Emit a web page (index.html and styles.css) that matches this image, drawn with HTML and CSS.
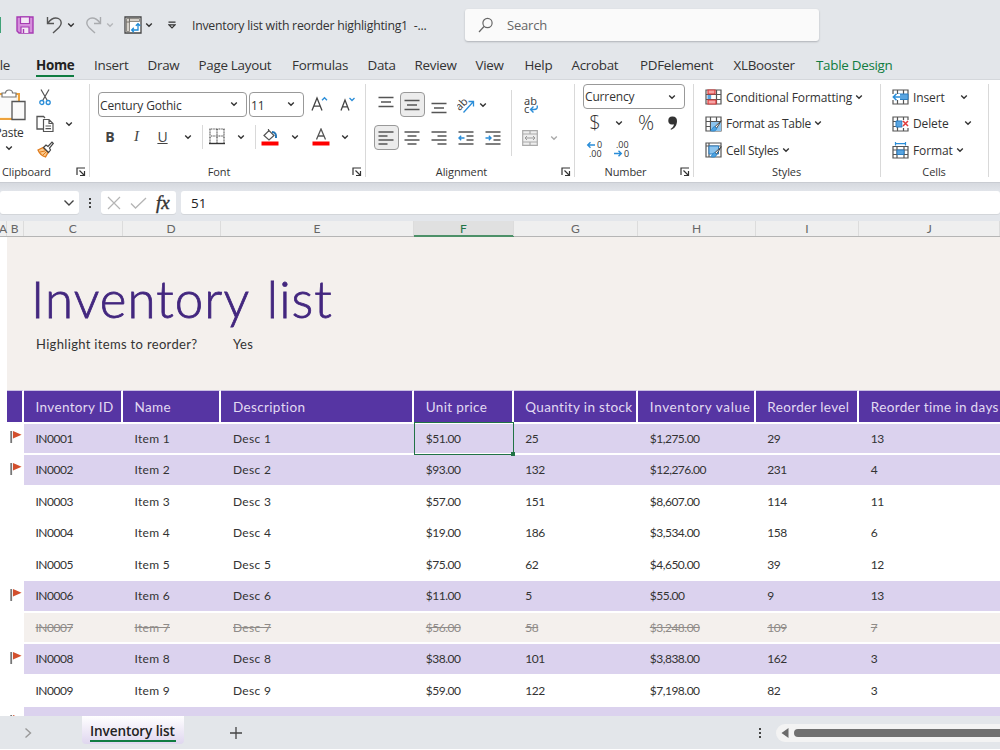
FILE: index.html
```html
<!DOCTYPE html>
<html lang="en">
<head>
    <meta charset="utf-8" />
    <meta name="viewport" content="width=device-width, initial-scale=1" />
    <title>Inventory list with reorder highlighting1</title>
    <link rel="stylesheet" href="styles.css">
</head>
<body>
    <!-- shared icons -->
    <svg class="defs" width="0" height="0">
        <symbol id="chev" viewBox="0 0 8 8"><path d="M1.2 2.5 4 5.3 6.8 2.5" fill="none" stroke="currentColor" stroke-width="1.4"/></symbol>
        <symbol id="launch" viewBox="0 0 10 10"><path d="M1 8V1h8M3.5 3.5 8 8M8.5 4v4.5H4" fill="none" stroke="#333" stroke-width="1.2"/></symbol>
        <symbol id="flag" viewBox="0 0 12 14"><path d="M1.2 1v12" stroke="#777" stroke-width="1.8"/><path d="M3 1l8.6 3.7L3 8.4z" fill="#d24f2d"/></symbol>
        <symbol id="sheet" viewBox="0 0 17 16"><path d="M1 1h15v14H1zM1 5.5h15M1 10.5h15M5.5 1v14M11.5 1v14" fill="#fff" stroke="#555" stroke-width="1.2"/></symbol>
        <symbol id="brush" viewBox="0 0 12 12"><path d="M11.3.7 5 6.6l1.6 1.6z" fill="#fff" stroke="#444" stroke-width="1"/><path d="M4.6 6.6c-2 .2-1.8 2.6-4 4 2.500 1 6 .6 6-2.400z" fill="#4ea3e0" stroke="#2581c9" stroke-width=".8"/></symbol>
    </svg>

    <header class="titlebar">
        <span class="logo-edge"></span>
        <svg class="tb-save" width="18" height="18" viewBox="0 0 18 18"><path d="M1 1h16v16H3L1 15z" fill="#d58fdc" stroke="#a63bb3" stroke-width="1.4"/><path d="M4.500 1h9v6.500h-9z" fill="#f3e7f5" stroke="#a63bb3" stroke-width="1.2"/><path d="M5 17v-6h8v6" fill="#f3e7f5" stroke="#a63bb3" stroke-width="1.2"/><path d="M7.500 13v4" stroke="#a63bb3" stroke-width="1.4"/></svg>
        <svg class="tb-undo" width="17" height="18" viewBox="0 0 17 18"><path d="M1.500 1v6.500H8M1.800 7.200C4.500 3.500 7 2 9.800 2c3.200 0 5.400 2.200 5.400 5 0 2-1 3.200-2.200 4.400L7 17" fill="none" stroke="#555" stroke-width="1.4"/></svg>
        <svg class="chev tb-c1" width="8" height="8"><use href="#chev"/></svg>
        <svg class="tb-redo" width="17" height="18" viewBox="0 0 17 18"><path d="M15.500 1v6.500H9M15.200 7.200C12.500 3.500 10 2 7.200 2 4 2 1.800 4.200 1.800 7c0 2 1 3.200 2.200 4.400L10 17" fill="none" stroke="#a9abae" stroke-width="1.4"/></svg>
        <svg class="chev tb-c2" width="8" height="8"><use href="#chev"/></svg>
        <svg class="tb-pivot" width="18" height="18" viewBox="0 0 18 18"><path d="M1 1h16v16H1z" fill="#fff" stroke="#444" stroke-width="1.3"/><path d="M2.500 2.500h13v3h-10v10h-3z" fill="#d6d2cb" stroke="#77736d" stroke-width=".8"/><path d="M5.500 2v4M2 6h4" stroke="#77736d"/><path d="M8 14h6V8M9.800 11.800 7.700 14l2.100 2.200M11.800 9.800 14 7.700l2.200 2.100" fill="none" stroke="#1e8ad6" stroke-width="1.3"/></svg>
        <svg class="chev tb-c3" width="8" height="8"><use href="#chev"/></svg>
        <svg class="tb-more" width="8" height="8" viewBox="0 0 8 8"><path d="M.5 1.200h7M1 3.800h6L4 6.800z" fill="none" stroke="#333" stroke-width="1.200"/></svg>
        <span class="doc-name">Inventory list with reorder highlighting1&nbsp; -...</span>
        <div class="search">
            <svg width="16" height="16" viewBox="0 0 16 16"><circle cx="9.500" cy="6" r="4.600" fill="none" stroke="#666" stroke-width="1.200"/><path d="M6 9.500 1 15" stroke="#666" stroke-width="1.200"/></svg>
            <span>Search</span>
        </div>
    </header>

    <nav class="tabs">
        <span class="cut">File</span><span class="on">Home</span><span>Insert</span><span>Draw</span><span>Page Layout</span><span>Formulas</span><span>Data</span><span>Review</span><span>View</span><span>Help</span><span>Acrobat</span><span>PDFelement</span><span>XLBooster</span><span class="ctx">Table Design</span>
    </nav>

    <section class="ribbon">
        <div class="group clipboard">
            <div class="body">
                <div class="paste">
                    <svg width="30" height="34" viewBox="0 0 30 34"><path d="M1 5h22v25H1z" fill="#fff3df" stroke="#eda23c" stroke-width="2"/><path d="M4 8h16v20H4z" fill="#fafafa"/><path d="M6 8V4h3.500C9.500 0 16.500 0 16.500 4H20v4z" fill="#fff" stroke="#777" stroke-width="1.200"/><path d="M16 12.500h13v18H16z" fill="#fafafa" stroke="#555" stroke-width="1.300"/></svg>
                    <span>Paste</span>
                    <svg class="chev" width="8" height="8"><use href="#chev"/></svg>
                </div>
                <div class="clip-tools">
                    <svg width="12" height="17" viewBox="0 0 12 17"><path d="M2 .5 8.300 11.500M10 .5 3.700 11.500" stroke="#555" stroke-width="1.200"/><circle cx="2.800" cy="13.500" r="2" fill="none" stroke="#2a8dd8" stroke-width="1.300"/><circle cx="9.200" cy="13.500" r="2" fill="none" stroke="#2a8dd8" stroke-width="1.300"/></svg>
                    <span></span>
                    <svg width="18" height="18" viewBox="0 0 18 18"><path d="M7 14H1V1.500h6.500l1.500 1.500" fill="none" stroke="#555" stroke-width="1.300"/><path d="M7.500 4.500H13l4 4v8H7.500zM13 4.500v4h4M9.500 11h5.500M9.500 13.700h5.500" fill="#fff" stroke="#555" stroke-width="1.200"/></svg>
                    <svg class="chev" width="8" height="8"><use href="#chev"/></svg>
                    <svg width="17" height="17" viewBox="0 0 17 17"><path d="M1 9l5-2.500L11 11.500 8.500 16C5 15 2.500 12.500 1 9z" fill="#fbc98c" stroke="#e07b1c" stroke-width="1.300"/><path d="M3 11l5-1M6 14l3-3" stroke="#e07b1c"/><path d="M6.500 6.500 9 4l2 1.500L15 1.200l1.300 1.300L12.500 7l1 2-2 2.500z" fill="#fff" stroke="#444" stroke-width="1.200"/></svg>
                </div>
            </div>
            <div class="label"><span>Clipboard</span><svg width="10" height="10"><use href="#launch"/></svg></div>
        </div>

        <div class="group font">
            <div class="body">
                <div class="font-top">
                    <div class="combo"><span>Century Gothic</span><svg class="chev" width="8" height="8"><use href="#chev"/></svg></div>
                    <div class="combo size"><span>11</span><svg class="chev" width="8" height="8"><use href="#chev"/></svg></div>
                    <svg width="18" height="16" viewBox="0 0 18 16"><path d="M1 14.500 6 2l5 12.500M2.800 10.200h6.400" fill="none" stroke="#444" stroke-width="1.300"/><path d="M11 4.200 13.500 1.700 16 4.200" fill="none" stroke="#2a8dd8" stroke-width="1.300"/></svg>
                    <svg width="16" height="16" viewBox="0 0 16 16"><path d="M1 14.500 5 4l4 10.500M2.500 10.800h5" fill="none" stroke="#444" stroke-width="1.300"/><path d="M9.500 2 12 4.500 14.500 2" fill="none" stroke="#2a8dd8" stroke-width="1.300"/></svg>
                </div>
                <div class="font-bottom">
                    <b>B</b><i>I</i><u>U</u>
                    <svg class="chev" width="8" height="8"><use href="#chev"/></svg>
                    <span class="sep"></span>
                    <svg width="16" height="17" viewBox="0 0 16 17"><path d="M.5 1h15M.5 8h15M1 1v14M8 1v14M15 1v14" stroke="#444" stroke-width="1.200" stroke-dasharray="1 .6"/><path d="M0 15.500h16" stroke="#333" stroke-width="1.400"/></svg>
                    <svg class="chev" width="8" height="8"><use href="#chev"/></svg>
                    <span class="sep"></span>
                    <svg width="18" height="18" viewBox="0 0 18 18"><path d="M7.500 1v3M3 7.500l5-5 5 5-5 4.500z" fill="#fff" stroke="#555" stroke-width="1.200"/><path d="M11 4c3 0 4.500 2 4 6" fill="none" stroke="#2374b5" stroke-width="2"/><path d="M.5 13.500h17V17.500H.5z" fill="#f00"/></svg>
                    <svg class="chev" width="8" height="8"><use href="#chev"/></svg>
                    <svg width="18" height="18" viewBox="0 0 18 18"><path d="M4.500 11.500 9 1l4.500 10.500M6 8h6" fill="none" stroke="#555" stroke-width="1.300"/><path d="M.5 13.500h17V17.500H.5z" fill="#f00"/></svg>
                    <svg class="chev" width="8" height="8"><use href="#chev"/></svg>
                </div>
            </div>
            <div class="label"><span>Font</span><svg width="10" height="10"><use href="#launch"/></svg></div>
        </div>

        <div class="group align">
            <div class="body">
                <div class="align-main">
                    <span class="btn high"><svg width="16" height="14" viewBox="0 0 16 14"><path d="M.5 1.500h15M3 6h10M.5 10.500h15"/></svg></span>
                    <span class="btn pressed"><svg width="16" height="14" viewBox="0 0 16 14"><path d="M.5 2.500h15M3 7h10M.5 11.500h15"/></svg></span>
                    <span class="btn low"><svg width="16" height="14" viewBox="0 0 16 14"><path d="M.5 2.500h15M3 7h10M.5 11.500h15"/></svg></span>
                    <span class="btn"><svg class="plain" width="18" height="18" viewBox="0 0 18 18"><text x="-1" y="11" transform="rotate(-45 6 9)" font-family="Noto Sans" font-size="11" fill="#444">ab</text><path d="M6.500 16.500 16 6M11.500 5.500h5v5" fill="none" stroke="#2a8dd8" stroke-width="1.400"/></svg></span>
                    <svg class="chev" width="8" height="8"><use href="#chev"/></svg>
                    <span class="btn pressed"><svg width="16" height="14" viewBox="0 0 16 14"><path d="M.5 1h15M.5 5h9M.5 9h15M.5 13h9"/></svg></span>
                    <span class="btn"><svg width="16" height="14" viewBox="0 0 16 14"><path d="M.5 1h15M3.500 5h9M.5 9h15M3.500 13h9"/></svg></span>
                    <span class="btn"><svg width="16" height="14" viewBox="0 0 16 14"><path d="M.5 1h15M6.500 5h9M.5 9h15M6.500 13h9"/></svg></span>
                    <span class="btn"><svg width="16" height="14" viewBox="0 0 16 14"><path d="M.5 1h15M8.500 5h7M8.500 9h7M.5 13h15"/><path class="blue" d="M6.500 7H1M3.200 4.700.9 7l2.300 2.300"/></svg></span>
                    <span class="btn"><svg width="16" height="14" viewBox="0 0 16 14"><path d="M.5 1h15M8.500 5h7M8.500 9h7M.5 13h15"/><path class="blue" d="M.5 7H6M3.800 4.700 6.100 7 3.800 9.300"/></svg></span>
                </div>
                <span class="sep tall"></span>
                <div class="align-side">
                    <svg width="17" height="18" viewBox="0 0 17 18"><text x="2" y="9" font-family="Noto Sans" font-size="11" fill="#444">ab</text><text x="2" y="17" font-family="Noto Sans" font-size="11" fill="#444">c</text><path d="M15 9.500c1.200 2.500-.5 4-3 4H8.500M11.500 10.500l-3 3 3 3" fill="none" stroke="#2a8dd8" stroke-width="1.400"/></svg>
                    <span></span>
                    <svg width="16" height="16" viewBox="0 0 16 16"><path d="M.7.7h14.600v14.600H.7zM.7 4h14.600M.7 12h14.600M8 .7V4M8 12v3.300" fill="#eee" stroke="#aaa" stroke-width="1.200"/><path d="M3 8h10M5 6 3 8l2 2M11 6l2 2-2 2" fill="none" stroke="#999"/></svg>
                    <svg class="chev dim" width="8" height="8"><use href="#chev"/></svg>
                </div>
            </div>
            <div class="label"><span>Alignment</span><svg width="10" height="10"><use href="#launch"/></svg></div>
        </div>

        <div class="group number">
            <div class="body">
                <div class="combo"><span>Currency</span><svg class="chev" width="8" height="8"><use href="#chev"/></svg></div>
                <div class="num-row">
                    <span class="sym">$</span>
                    <svg class="chev" width="8" height="8"><use href="#chev"/></svg>
                    <span class="sym">%</span>
                    <svg width="10" height="14" viewBox="0 0 10 14"><path d="M4.600.5a4 4 0 0 0-.6 8c.8.100 1.500 0 2-.3-.4 2-1.500 3.600-3.500 4.800l.5.8C6.500 12.500 9 9.500 9 5 9 2 7.500.5 4.600.5z" fill="#333"/></svg>
                </div>
                <div class="num-row">
                    <svg width="18" height="18" viewBox="0 0 18 18"><text x="11" y="8" class="dig">0</text><text x="3" y="17" class="dig">.00</text><path d="M9 5H1.700M4.500 2.200 1.700 5l2.800 2.800" fill="none" stroke="#2a8dd8" stroke-width="1.400"/></svg>
                    <svg width="18" height="18" viewBox="0 0 18 18"><text x="3" y="8" class="dig">.00</text><text x="11" y="17" class="dig">0</text><path d="M1 13.500h7.300M5.500 10.700l2.800 2.800-2.800 2.800" fill="none" stroke="#2a8dd8" stroke-width="1.400"/></svg>
                </div>
            </div>
            <div class="label"><span>Number</span><svg width="10" height="10"><use href="#launch"/></svg></div>
        </div>

        <div class="group styles">
            <div class="body list">
                <div class="item"><svg width="17" height="16" viewBox="0 0 17 16"><use href="#sheet" width="17" height="16"/><path d="M3 1h7v4H3zM3 11h8v4H3z" fill="#f6a5a5" stroke="#d83b3b" stroke-width="1.200"/><path d="M2.500 6h3.500v4H2.500z" fill="#5aa5e0"/></svg><span>Conditional Formatting</span><svg class="chev" width="8" height="8"><use href="#chev"/></svg></div>
                <div class="item"><svg width="17" height="16" viewBox="0 0 17 16"><use href="#sheet" width="17" height="16"/><path d="M6 6h10v9H6z" fill="#8cc4ee"/><use href="#brush" x="5" y="4" width="12" height="12"/></svg><span class="tight">Format as Table</span><svg class="chev" width="8" height="8"><use href="#chev"/></svg></div>
                <div class="item"><svg width="17" height="16" viewBox="0 0 17 16"><path d="M1 1h15v14H1zM1 4h15M4 1v14" fill="#fff" stroke="#555" stroke-width="1.200"/><path d="M4 4h9.500v8H4z" fill="#8cc4ee" stroke="#2a7fc4"/><use href="#brush" x="5" y="4" width="12" height="12"/></svg><span class="tight">Cell Styles</span><svg class="chev" width="8" height="8"><use href="#chev"/></svg></div>
            </div>
            <div class="label solo"><span>Styles</span></div>
        </div>

        <div class="group cells">
            <div class="body list">
                <div class="item"><svg width="17" height="16" viewBox="0 0 17 16"><use href="#sheet" width="17" height="16"/><path d="M6 5h10v5.500H6z" fill="#5aa5e0" stroke="#2a7fc4"/><path d="M0 5h8v6H0z" fill="#fff"/><path d="M8 8H1.500M4.500 4.800 1.300 8l3.200 3.200" fill="none" stroke="#2a8dd8" stroke-width="1.500"/></svg><span>Insert</span><svg class="chev far" width="8" height="8"><use href="#chev"/></svg></div>
                <div class="item"><svg width="17" height="16" viewBox="0 0 17 16"><use href="#sheet" width="17" height="16"/><path d="M4 5h6v6H4z" fill="#5aa5e0" stroke="#2a7fc4"/><path d="M10.500 4H17v8h-6.500z" fill="#fff"/><path d="M11 5l5 5M16 5l-5 5" stroke="#e03c3c" stroke-width="1.500"/></svg><span>Delete</span><svg class="chev far" width="8" height="8"><use href="#chev"/></svg></div>
                <div class="item"><svg width="17" height="17" viewBox="0 0 17 17"><path d="M1 4.500h15V16H1zM1 8h15M1 12.500h15M5 4.500V16M12 4.500V16" fill="#fff" stroke="#555" stroke-width="1.200"/><path d="M5 8h7v4.500H5z" fill="#5aa5e0" stroke="#2a7fc4"/><path d="M3.500 1.700h10M3.500 0v3.500M13.500 0v3.500" stroke="#2a8dd8" stroke-width="1.200"/></svg><span>Format</span><svg class="chev" width="8" height="8"><use href="#chev"/></svg></div>
            </div>
            <div class="label solo"><span>Cells</span></div>
        </div>
    </section>

    <section class="formula">
        <div class="name-box"><svg width="12" height="12" viewBox="0 0 12 12"><path d="M1.500 3.500 6 8l4.500-4.500" fill="none" stroke="#444" stroke-width="1.400"/></svg></div>
        <span class="dots"><i></i><i></i><i></i></span>
        <div class="fx-box">
            <svg width="14" height="14" viewBox="0 0 14 14"><path d="M1 1l12 12M13 1 1 13" stroke="#b5b5b5" stroke-width="1.200"/></svg>
            <svg width="17" height="12" viewBox="0 0 17 12"><path d="M1 6.500 5.500 11 16 1" fill="none" stroke="#b5b5b5" stroke-width="1.300"/></svg>
            <span class="fx">fx</span>
        </div>
        <div class="value">51</div>
    </section>

    <main class="sheet">
        <div class="row cols"><span>A</span><span>B</span><span>C</span><span>D</span><span>E</span><span class="sel">F</span><span>G</span><span>H</span><span>I</span><span>J</span></div>
        <div class="banner">
            <h1>Inventory list</h1>
            <p><span>Highlight items to reorder?</span><span>Yes</span></p>
        </div>
        <div class="row head"><span></span><span></span><span>Inventory ID</span><span>Name</span><span>Description</span><span>Unit price</span><span>Quantity in stock</span><span>Inventory value</span><span>Reorder level</span><span>Reorder time in days</span></div>
        <div class="row hot"><span></span><span><svg width="12" height="14"><use href="#flag"/></svg></span><span>IN0001</span><span>Item 1</span><span>Desc 1</span><span class="active">$51.00</span><span>25</span><span>$1,275.00</span><span>29</span><span>13</span></div>
        <div class="row hot"><span></span><span><svg width="12" height="14"><use href="#flag"/></svg></span><span>IN0002</span><span>Item 2</span><span>Desc 2</span><span>$93.00</span><span>132</span><span>$12,276.00</span><span>231</span><span>4</span></div>
        <div class="row"><span></span><span></span><span>IN0003</span><span>Item 3</span><span>Desc 3</span><span>$57.00</span><span>151</span><span>$8,607.00</span><span>114</span><span>11</span></div>
        <div class="row"><span></span><span></span><span>IN0004</span><span>Item 4</span><span>Desc 4</span><span>$19.00</span><span>186</span><span>$3,534.00</span><span>158</span><span>6</span></div>
        <div class="row"><span></span><span></span><span>IN0005</span><span>Item 5</span><span>Desc 5</span><span>$75.00</span><span>62</span><span>$4,650.00</span><span>39</span><span>12</span></div>
        <div class="row hot"><span></span><span><svg width="12" height="14"><use href="#flag"/></svg></span><span>IN0006</span><span>Item 6</span><span>Desc 6</span><span>$11.00</span><span>5</span><span>$55.00</span><span>9</span><span>13</span></div>
        <div class="row gone"><span></span><span></span><span>IN0007</span><span>Item 7</span><span>Desc 7</span><span>$56.00</span><span>58</span><span>$3,248.00</span><span>109</span><span>7</span></div>
        <div class="row hot"><span></span><span><svg width="12" height="14"><use href="#flag"/></svg></span><span>IN0008</span><span>Item 8</span><span>Desc 8</span><span>$38.00</span><span>101</span><span>$3,838.00</span><span>162</span><span>3</span></div>
        <div class="row"><span></span><span></span><span>IN0009</span><span>Item 9</span><span>Desc 9</span><span>$59.00</span><span>122</span><span>$7,198.00</span><span>82</span><span>3</span></div>
        <div class="row hot"><span></span><span><svg width="12" height="14"><use href="#flag"/></svg></span><span></span><span></span><span></span><span></span><span></span><span></span><span></span><span></span></div>
    </main>

    <footer class="bottom">
        <svg class="next" width="8" height="12" viewBox="0 0 8 12"><path d="M1.500 1.500 6.500 6l-5 4.500" fill="none" stroke="#999" stroke-width="1.400"/></svg>
        <div class="sheet-tab"><span>Inventory list</span></div>
        <svg class="add" width="12" height="12" viewBox="0 0 12 12"><path d="M6 0v12M0 6h12" stroke="#444" stroke-width="1.300"/></svg>
        <span class="dots"><i></i><i></i><i></i></span>
        <div class="scroll"><svg width="8" height="10" viewBox="0 0 8 10"><path d="M7.500 0v10L.5 5z" fill="#6b6b6b"/></svg><span class="thumb"></span></div>
    </footer>
</body>
</html>
```

FILE: styles.css
```css
* {
    box-sizing: border-box;
}
body {
    margin: 0;
    width: 1000px;
    height: 750px;
    overflow: hidden;
    display: flex;
    flex-direction: column;
    background: #fff;
    color: #333;
    font-family: "Open Sans", sans-serif;
    font-size: 12px;
    white-space: nowrap;
}
svg {
    display: block;
    flex: none;
}
.defs {
    position: absolute;
}
.chev {
    color: #333;
}
.dim {
    color: #aaa;
}

/* title bar */
.titlebar {
    height: 50px;
    flex: none;
    display: flex;
    align-items: center;
    background: #e3e6ea;
}
.logo-edge {
    width: 1px;
    height: 16px;
    background: #3fa277;
    margin-right: 15px;
}
.tb-undo {
    margin-left: 12px;
}
.tb-c1 {
    margin-left: 4px;
}
.tb-redo {
    margin-left: 10px;
}
.tb-c2 {
    margin-left: 4px;
    color: #b5b7ba;
}
.tb-pivot {
    margin-left: 10px;
}
.tb-c3 {
    margin-left: 3px;
}
.tb-more {
    margin-left: 15px;
}
.doc-name {
    width: 273px;
    margin-left: 16px;
    font-size: 12.3px;
    letter-spacing: -0.25px;
}
.search {
    width: 354px;
    height: 32px;
    display: flex;
    align-items: center;
    gap: 13px;
    padding-left: 13px;
    background: #fafafa;
    border-radius: 3px;
    box-shadow: 0 1px 2px #aeb1b6;
    color: #666;
    font-size: 13px;
    letter-spacing: -0.2px;
}

/* tabs */
.tabs {
    height: 30px;
    flex: none;
    display: grid;
    grid-template-columns: 36px 58px 53.5px 51px 93.5px 75.5px 47px 61px 49px 47px 68.5px 93.5px 82.5px 1fr;
    justify-items: start;
    align-items: center;
    padding-top: 2px;
    background: #e3e6ea;
    border-bottom: 1px solid #d5d8dc;
    font-size: 13.4px;
    letter-spacing: -0.28px;
}
.tabs span {
    line-height: 20px;
    border-bottom: 2px solid transparent;
}
.tabs .cut {
    margin-left: -10px;
}
.tabs .on {
    font-weight: 700;
    color: #222;
    border-color: #107c41;
}
.tabs .ctx {
    color: #107c41;
}

/* ribbon */
.ribbon {
    height: 103px;
    flex: none;
    display: flex;
    padding-top: 4px;
    background: #fff;
    border-bottom: 1px solid #c9ccd2;
}
.group {
    display: flex;
    flex-direction: column;
    height: 93px;
    border-right: 1px solid #d9d9d9;
}
.body {
    height: 80px;
    flex: none;
}
.label {
    display: flex;
    align-items: center;
    height: 17px;
    font-size: 11px;
    padding-right: 3px;
    letter-spacing: -0.1px;
}
.label span {
    flex: 1;
    text-align: center;
    padding-right: 4px;
}
.label.solo {
    padding-right: 0;
}
.label.solo span {
    padding-right: 1px;
}
.clipboard {
    width: 112px;
    margin-left: -22px;
}
.clipboard .label span {
    padding-right: 1px;
}
.clipboard .body {
    display: flex;
}
.paste {
    width: 56px;
    display: flex;
    flex-direction: column;
    align-items: center;
    padding: 5px 0 0 6px;
}
.paste span {
    line-height: 20px;
    margin-bottom: 1px;
    letter-spacing: -0.3px;
}
.paste svg:first-child {
    margin-right: -3px;
}
.clip-tools {
    display: grid;
    grid-template-columns: 22px 26px;
    grid-template-rows: 26px 27px 25px;
    justify-items: center;
    align-items: center;
}
.combo {
    display: flex;
    align-items: center;
    justify-content: space-between;
    height: 25px;
    padding: 0 8px 0 1px;
    border: 1px solid #999;
    border-radius: 4px;
    letter-spacing: -0.15px;
}
.font {
    width: 276px;
}
.font-top {
    display: grid;
    grid-template-columns: 149px 55px 28px 24px;
    column-gap: 2px;
    align-items: center;
    justify-items: center;
    padding: 8px 0 0 8px;
}
.font-top .combo {
    width: 100%;
    padding-top: 1px;
}
.font-top svg {
    margin-top: -2px;
}
.font-bottom {
    display: grid;
    grid-template-columns: 26px 27px 25px 25px 4px 25px 24px 5px 24px 25px 28px 20px;
    height: 38px;
    align-items: center;
    justify-items: center;
    padding: 1px 0 0 7px;
    font-size: 14px;
    color: #444;
}
.font-bottom i {
    font-family: "Liberation Serif", serif;
    font-size: 15px;
}
.sep {
    width: 1px;
    height: 24px;
    background: #d9d9d9;
}
.align {
    width: 209px;
}
.align .body {
    display: flex;
    padding: 4px 0 0 7px;
}
.align-main {
    display: grid;
    grid-template-columns: 26px 26.5px 27px 26.5px 27px;
    grid-template-rows: 33px 33px;
    align-items: center;
    justify-items: center;
}
.align-main > .chev {
    justify-self: start;
}
.btn {
    width: 25px;
    height: 25px;
    display: grid;
    place-items: center;
    border: 1px solid transparent;
    border-radius: 4px;
}
.btn path {
    stroke: #555;
    stroke-width: 1.3;
    fill: none;
}
.btn path.blue,
.btn .plain path {
    stroke: #2a8dd8;
}
.high {
    padding-bottom: 4px;
}
.low {
    padding-top: 6px;
}
.pressed {
    background: #ececec;
    border-color: #999;
}
.sep.tall {
    height: 66px;
    margin: 2px 0 0 5px;
}
.align-side {
    display: grid;
    grid-template-columns: 36px 12px;
    grid-template-rows: 33px 33px;
    align-items: center;
    justify-items: center;
}
.number {
    width: 119px;
}
.number .combo {
    width: 102px;
    margin-left: 8px;
}
.num-row {
    display: grid;
    grid-template-columns: 24px 24px 30px 24px;
    height: 27px;
    align-items: center;
    justify-items: center;
    padding-left: 8px;
}
.num-row:last-child {
    grid-template-columns: 24px 30px;
    height: 26px;
}
.sym {
    font-size: 20px;
    font-weight: 300;
    line-height: 20px;
}
.dig {
    font-size: 9px;
    fill: #333;
}
.styles {
    width: 187px;
}
.cells {
    width: 108px;
}
.list {
    display: grid;
    grid-template-rows: 26px 27px 26px;
    padding-left: 11px;
    letter-spacing: -0.12px;
}
.item {
    display: flex;
    align-items: center;
    gap: 4px;
}
.item .chev {
    margin: -1px 0 0 -1px;
}
.tight {
    letter-spacing: -0.3px;
}
.item .far {
    margin-left: 11px;
}

/* formula bar */
.formula {
    height: 38px;
    flex: none;
    display: flex;
    align-items: flex-start;
    padding-top: 8px;
    background: linear-gradient(#d6d9df, #e3e6eb 9px);
}
.formula > div {
    height: 23px;
    display: flex;
    align-items: center;
    background: #fff;
    border-radius: 3px;
    box-shadow: 0 1px 0 #d3d6da;
}
.name-box {
    width: 79px;
    justify-content: flex-end;
    padding-right: 4px;
}
.dots {
    display: grid;
    gap: 2px;
    width: 2px;
}
.dots i {
    width: 2px;
    height: 2px;
    background: #444;
}
.formula .dots {
    margin: 7px 10px 0;
}
.fx-box {
    width: 75px;
    gap: 9px;
    padding-left: 6px;
}
.fx {
    font: italic 19px/20px "Liberation Serif", serif;
    -webkit-text-stroke: 0.4px #333;
}
.value {
    flex: 1;
    margin-left: 5px;
    padding-left: 10px;
    font-size: 13.5px;
    color: #222;
}

/* worksheet */
.sheet {
    height: 495px;
    flex: none;
    overflow: hidden;
    font-family: "Century Gothic", Lato, sans-serif;
}
.row {
    display: grid;
    grid-template-columns: 7px 16.5px 99px 98.5px 193px 99.5px 124.5px 117.5px 103.5px 1fr;
    height: 31.5px;
    padding-bottom: 2px;
    font-size: 12px;
    letter-spacing: -0.5px;
}
.row span {
    display: flex;
    align-items: center;
    padding-left: 12px;
}
.row span:nth-child(4),
.row span:nth-child(5) {
    letter-spacing: 0.3px;
}
.row span:nth-child(n+6) {
    padding-left: 11.8px;
}
.row span:nth-child(-n+2) {
    padding: 0;
    justify-content: center;
}
.row svg {
    margin: -2px 0 0 1px;
}
.row.cols {
    height: 16px;
    padding: 0;
    background: #efefef;
    border-bottom: 1px solid #b5b5b5;
    color: #666;
}
.row.cols span {
    padding: 0;
    justify-content: center;
    border-right: 1px solid #dcdcdc;
}
.row.cols span:nth-child(-n+2) {
    letter-spacing: 0;
}
.row.cols .sel {
    background: #e0e0e0;
    color: #217346;
    box-shadow: 0 1px 0 #4c9068, inset 0 -1px 0 #4c9068;
}
.banner {
    height: 153px;
    margin-left: 7px;
    padding: 30px 0 0 24px;
    background: #f4f0ed;
}
.banner h1 {
    margin: 0;
    font-size: 51px;
    line-height: 64px;
    font-weight: 300;
    letter-spacing: 1.1px;
    word-spacing: 3px;
    -webkit-text-stroke: 0.8px #43277f;
    color: #43277f;
}
.banner p {
    display: grid;
    grid-template-columns: 197px 1fr;
    margin: 5px 0 0 5px;
    font-size: 13px;
    letter-spacing: 0.33px;
}
.head {
    height: 33.5px;
    font-size: 13.5px;
    color: #e2daf2;
}
.head span:nth-child(n+2) {
    background: #5635a3;
    border-right: 2px solid #fff;
    border-top: 1px solid #c9bfe2;
}
.head span:nth-child(n+3) {
    padding-top: 2px;
    letter-spacing: 0.35px;
}
.head span:nth-child(8) {
    letter-spacing: 0.65px;
}
.head span:last-child {
    border-right: 0;
}
.hot span:nth-child(n+3) {
    background: #dbd2ee;
}
.gone span:nth-child(n+3) {
    background: #f4f0ed;
    color: #8f8b88;
    text-decoration: line-through;
}
.row .active {
    position: relative;
}
.active::before {
    content: "";
    position: absolute;
    inset: -2px 0 -2px 0;
    border: 1.5px solid #217346;
}
.active::after {
    content: "";
    position: absolute;
    right: -1px;
    bottom: -3px;
    width: 4px;
    height: 4px;
    background: #217346;
}

/* sheet tabs */
.bottom {
    height: 33px;
    flex: none;
    display: flex;
    align-items: center;
    background: #e3e6ea;
}
.next {
    margin-left: 24px;
}
.sheet-tab {
    height: 28px;
    width: 102px;
    margin: -5px 0 0 50px;
    padding: 1px 8px 0;
    background: linear-gradient(#fff, #dfd6ef);
    border-radius: 0 0 4px 4px;
    font-size: 13.6px;
    font-weight: 600;
    letter-spacing: -0.12px;
    color: #222;
}
.sheet-tab span {
    display: block;
    line-height: 27px;
    height: 25px;
    border-bottom: 2px solid #107c41;
}
.add {
    margin-left: 46px;
}
.bottom .dots {
    margin-left: 517px;
}
.scroll {
    flex: 1;
    height: 18px;
    margin-left: 15px;
    display: flex;
    align-items: center;
    gap: 5px;
    padding-left: 5px;
    background: #f3f3f3;
    border-radius: 9px 0 0 9px;
}
.thumb {
    flex: 1;
    height: 8px;
    background: #707070;
    border-radius: 4px 0 0 4px;
}
```
